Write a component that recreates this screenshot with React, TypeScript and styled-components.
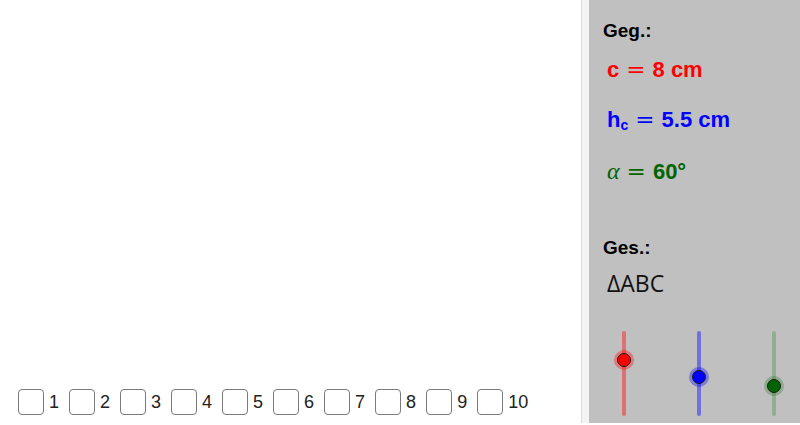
import styled, { createGlobalStyle } from "styled-components";

const GlobalStyle = createGlobalStyle`
  html, body {
    margin: 0;
    padding: 0;
    background: #ffffff;
  }
  body {
    font-family: "Liberation Sans", Arial, sans-serif;
  }
`;

const Frame = styled.div`
  display: flex;
  width: 800px;
  height: 425px;
  overflow: hidden;
`;

const Canvas = styled.div`
  width: 581px;
  display: flex;
  flex-direction: column;
  justify-content: flex-end;
  padding-bottom: 10px;
  box-sizing: border-box;
`;

const Divider = styled.div`
  width: 8px;
  height: 423px;
  background: #f4f4f4;
  border-left: 1px solid #dcdcdc;
  box-sizing: border-box;
`;

const Panel = styled.div`
  flex: 1;
  height: 423px;
  background: #c0c0c0;
  padding: 20px 0 0 14px;
  box-sizing: border-box;
  display: flex;
  flex-direction: column;
`;

const Heading = styled.div<{ $top?: number }>`
  font-family: "Liberation Sans", Arial, sans-serif;
  font-weight: bold;
  font-size: 19px;
  line-height: 22px;
  color: #000;
  margin-top: ${(p) => p.$top ?? 0}px;
`;

const Given = styled.div<{ $color: string; $top: number }>`
  font-family: "Liberation Sans", Arial, sans-serif;
  font-weight: bold;
  font-size: 22px;
  line-height: 24px;
  color: ${(p) => p.$color};
  margin-top: ${(p) => p.$top}px;
  padding-left: 4px;
  white-space: nowrap;
`;

const Eq = styled.span`
  font-family: "DejaVu Serif", serif;
  font-weight: normal;
  margin: 0 7px;
  font-size: 23px;
`;

const Sub = styled.sub`
  font-size: 14px;
  vertical-align: -3px;
`;

const Greek = styled.span`
  font-family: "Liberation Serif", serif;
  font-style: italic;
  font-weight: normal;
  font-size: 24px;
`;

const Sought = styled.div`
  font-family: "Open Sans", "Liberation Sans", sans-serif;
  font-size: 23px;
  line-height: 26px;
  color: #111;
  margin-top: 11px;
  padding-left: 4px;
`;

const SliderRow = styled.div`
  display: flex;
  gap: 71px;
  margin-top: 35px;
  padding-left: 19px;
`;

const Track = styled.div<{ $color: string }>`
  position: relative;
  width: 4px;
  height: 85px;
  background: ${(p) => p.$color};
  border-radius: 2px;
`;

const Knob = styled.div<{ $color: string; $halo: string }>`
  position: absolute;
  left: 50%;
  width: 12px;
  height: 12px;
  border-radius: 50%;
  background: ${(p) => p.$color};
  border: 1px solid #1a1a1a;
  box-shadow: 0 0 0 3px ${(p) => p.$halo};
  transform: translate(-50%, -50%);
`;

const Boxes = styled.div`
  display: flex;
  align-items: center;
  gap: 10px;
  padding-left: 18px;
`;

const Option = styled.label`
  display: flex;
  align-items: center;
  gap: 5px;
  font-family: "Liberation Sans", Arial, sans-serif;
  font-size: 18px;
  color: #222;
`;

const Box = styled.span`
  display: inline-block;
  width: 26px;
  height: 26px;
  border: 1px solid #7a7a7a;
  border-radius: 4px;
  background: #fff;
  box-sizing: border-box;
`;

const sliders = [
  { track: "#dd7171", knob: "#ff0000", halo: "rgba(255,0,0,0.35)", pos: 29 },
  { track: "#7070df", knob: "#0000ff", halo: "rgba(0,0,255,0.35)", pos: 46 },
  { track: "#90ae90", knob: "#006400", halo: "rgba(0,100,0,0.25)", pos: 55 },
];

export default function App() {
  return (
    <>
      <GlobalStyle />
      <Frame>
        <Canvas>
          <Boxes>
            {Array.from({ length: 10 }, (_, i) => (
              <Option key={i}>
                <Box />
                {i + 1}
              </Option>
            ))}
          </Boxes>
        </Canvas>
        <Divider />
        <Panel>
          <Heading>Geg.:</Heading>
          <Given $color="#ff0000" $top={15}>
            c<Eq>=</Eq>8 cm
          </Given>
          <Given $color="#0000ff" $top={25}>
            h<Sub>c</Sub>
            <Eq>=</Eq>5.5 cm
          </Given>
          <Given $color="#006400" $top={22}>
            <Greek>α</Greek>
            <Eq>=</Eq>60°
          </Given>
          <Heading $top={53}>Ges.:</Heading>
          <Sought>ΔABC</Sought>
          <SliderRow>
            {sliders.map((s, i) => (
              <Track key={i} $color={s.track}>
                <Knob
                  $color={s.knob}
                  $halo={s.halo}
                  style={{ top: `${s.pos}px` }}
                />
              </Track>
            ))}
          </SliderRow>
        </Panel>
      </Frame>
    </>
  );
}
